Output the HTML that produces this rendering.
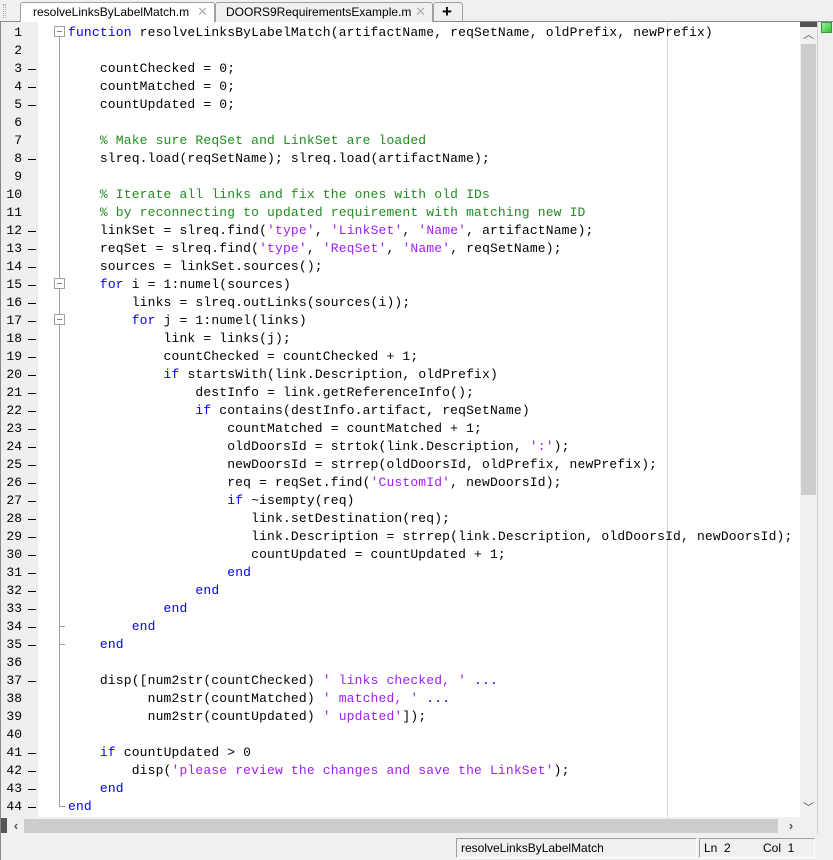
<!DOCTYPE html>
<html><head><meta charset="utf-8"><style>
*{margin:0;padding:0;box-sizing:border-box}
body{width:833px;height:860px;background:#f0f0f0;position:relative;overflow:hidden;font-family:"Liberation Sans",sans-serif}
.tabbar{position:absolute;left:0;top:0;width:833px;height:22px;background:#f0f0f0;border-bottom:1px solid #8a8a8a}
.tab{position:absolute;top:2px;height:20px;border:1px solid #a0a0a0;border-bottom:none;border-radius:3px 3px 0 0;font-size:12px;line-height:18px;padding-left:12px;color:#000}
.x{position:absolute;right:6px;top:0;color:#b0b0b0;font-size:13px}
.gut{position:absolute;left:0;top:22px;width:38px;height:795px;background:#efefef}
.code{position:absolute;left:38px;top:22px;width:762px;height:795px;background:#fff}
.ln{position:absolute;left:0;width:22px;text-align:right;font:13px "Liberation Mono",monospace;color:#000;line-height:18px}
.dash{position:absolute;left:28px;width:8px;height:1px;background:#000}
pre{position:absolute;left:68px;top:24px;font:13px/18px "Liberation Mono",monospace;color:#000;letter-spacing:0.16px}
.k{color:#0000ff}.s{color:#a020f0}.c{color:#228b22}
.fold{position:absolute;left:59px;width:1px;background:#a0a0a0}
.box{position:absolute;left:54px;width:11px;height:11px;border:1px solid #a0a0a0;background:#fff}
.box:after{content:"";position:absolute;left:2px;top:4px;width:5px;height:1px;background:#808080}
</style></head><body>
<div class="tabbar">
 <div style="position:absolute;left:3px;top:4px;width:3px;height:14px;border-left:1px dotted #aaa;border-right:1px dotted #aaa"></div>
 <div class="tab" style="left:20px;width:195px;background:#fff;height:21px">resolveLinksByLabelMatch.m<span class="x">✕</span></div>
 <div class="tab" style="left:215px;width:218px;background:#f0f0f0;padding-left:10px">DOORS9RequirementsExample.m<span class="x">✕</span></div>
 <div class="tab" style="left:433px;width:30px;padding-left:8px;font-size:17px;font-weight:bold;line-height:17px">+</div>
</div>
<div class="code"></div>
<div class="gut"></div>
<div style="position:absolute;left:667px;top:22px;width:1px;height:795px;background:#d8d8d8"></div>
<div id="g"></div>
<div class="fold" style="top:37px;height:770px"></div>
<div style="position:absolute;left:59px;top:806px;width:6px;height:1px;background:#a0a0a0"></div>
<div style="position:absolute;left:59px;top:626px;width:6px;height:1px;background:#a0a0a0"></div>
<div style="position:absolute;left:59px;top:644px;width:6px;height:1px;background:#a0a0a0"></div>
<div class="box" style="top:26px"></div>
<div class="box" style="top:278px"></div>
<div class="box" style="top:314px"></div>
<pre><span class="k">function</span> resolveLinksByLabelMatch(artifactName, reqSetName, oldPrefix, newPrefix)

    countChecked = 0;
    countMatched = 0;
    countUpdated = 0;

    <span class="c">% Make sure ReqSet and LinkSet are loaded</span>
    slreq.load(reqSetName); slreq.load(artifactName);

    <span class="c">% Iterate all links and fix the ones with old IDs</span>
    <span class="c">% by reconnecting to updated requirement with matching new ID</span>
    linkSet = slreq.find(<span class="s">'type'</span>, <span class="s">'LinkSet'</span>, <span class="s">'Name'</span>, artifactName);
    reqSet = slreq.find(<span class="s">'type'</span>, <span class="s">'ReqSet'</span>, <span class="s">'Name'</span>, reqSetName);
    sources = linkSet.sources();
    <span class="k">for</span> i = 1:numel(sources)
        links = slreq.outLinks(sources(i));
        <span class="k">for</span> j = 1:numel(links)
            link = links(j);
            countChecked = countChecked + 1;
            <span class="k">if</span> startsWith(link.Description, oldPrefix)
                destInfo = link.getReferenceInfo();
                <span class="k">if</span> contains(destInfo.artifact, reqSetName)
                    countMatched = countMatched + 1;
                    oldDoorsId = strtok(link.Description, <span class="s">':'</span>);
                    newDoorsId = strrep(oldDoorsId, oldPrefix, newPrefix);
                    req = reqSet.find(<span class="s">'CustomId'</span>, newDoorsId);
                    <span class="k">if</span> ~isempty(req)
                       link.setDestination(req);
                       link.Description = strrep(link.Description, oldDoorsId, newDoorsId);
                       countUpdated = countUpdated + 1;
                    <span class="k">end</span>
                <span class="k">end</span>
            <span class="k">end</span>
        <span class="k">end</span>
    <span class="k">end</span>

    disp([num2str(countChecked) <span class="s">' links checked, '</span> <span class="k">...</span>
          num2str(countMatched) <span class="s">' matched, '</span> <span class="k">...</span>
          num2str(countUpdated) <span class="s">' updated'</span>]);

    <span class="k">if</span> countUpdated &gt; 0
        disp(<span class="s">'please review the changes and save the LinkSet'</span>);
    <span class="k">end</span>
<span class="k">end</span></pre>
<div style="position:absolute;left:800px;top:22px;width:17px;height:795px;background:#f0f0f0"></div>
<div style="position:absolute;left:800px;top:22px;width:17px;height:5px;background:#555"></div>
<div style="position:absolute;left:800px;top:27px;width:17px;height:17px;text-align:center;font-size:11px;color:#555;line-height:17px">︿</div>
<div style="position:absolute;left:801px;top:44px;width:15px;height:451px;background:#cdcdcd"></div>
<div style="position:absolute;left:800px;top:800px;width:17px;height:17px;text-align:center;font-size:11px;color:#555;line-height:17px">﹀</div>
<div style="position:absolute;left:817px;top:22px;width:1px;height:812px;background:#d0d0d0"></div>
<div style="position:absolute;left:821px;top:22px;width:11px;height:11px;background:linear-gradient(135deg,#9ef09e,#2fc02f);border:1px solid #3a9a3a"></div>
<div style="position:absolute;left:0;top:817px;width:817px;height:17px;background:#f0f0f0"></div>
<div style="position:absolute;left:0;top:818px;width:7px;height:15px;background:#555"></div>
<div style="position:absolute;left:8px;top:817px;width:16px;height:17px;text-align:center;font-size:13px;font-weight:bold;color:#555;line-height:17px">‹</div>
<div style="position:absolute;left:24px;top:819px;width:754px;height:14px;background:#cdcdcd"></div>
<div style="position:absolute;left:783px;top:817px;width:16px;height:17px;text-align:center;font-size:13px;font-weight:bold;color:#555;line-height:17px">›</div>
<div style="position:absolute;left:0;top:22px;width:1px;height:838px;background:#888"></div>
<div style="position:absolute;left:456px;top:838px;width:241px;height:20px;border:1px solid #a0a0a0;border-right-color:#fff;border-bottom-color:#fff;font-size:12px;line-height:18px;padding-left:4px">resolveLinksByLabelMatch</div>
<div style="position:absolute;left:699px;top:838px;width:116px;height:20px;border:1px solid #a0a0a0;border-right-color:#fff;border-bottom-color:#fff;font-size:12px;line-height:18px;padding-left:4px">Ln&nbsp;&nbsp;2<span style="position:absolute;left:63px">Col&nbsp;&nbsp;1</span></div>
<script>
var g=document.getElementById('g'),h='';
var d=[3,4,5,8,12,13,14,15,16,17,18,19,20,21,22,23,24,25,26,27,28,29,30,31,32,33,34,35,37,41,42,43,44];
for(var i=1;i<=44;i++){var t=24+(i-1)*18;h+='<div class="ln" style="top:'+t+'px">'+i+'</div>';if(d.indexOf(i)>=0)h+='<div class="dash" style="top:'+(t+9)+'px"></div>';}
g.innerHTML=h;
</script>
</body></html>
